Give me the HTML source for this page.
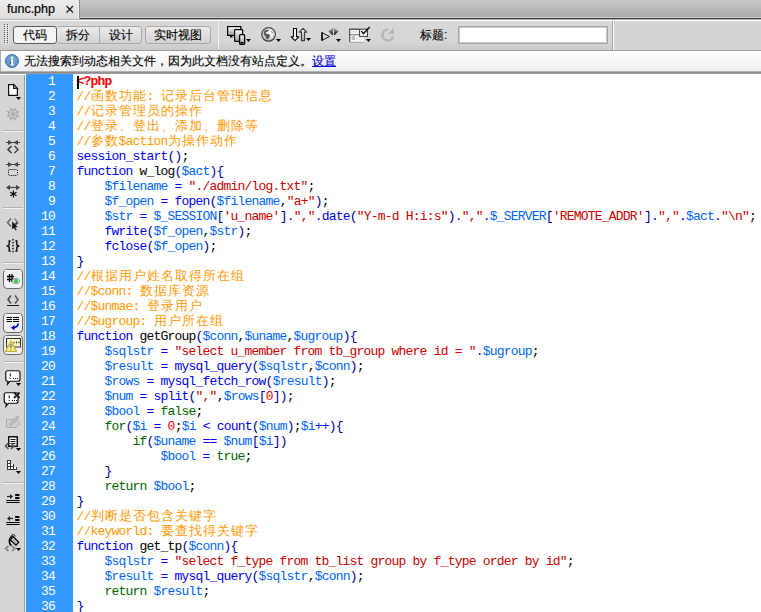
<!DOCTYPE html>
<html><head><meta charset="utf-8">
<style>
*{margin:0;padding:0;box-sizing:border-box}
html,body{width:761px;height:612px;overflow:hidden;background:#fff;font-family:"Liberation Sans",sans-serif}
.a{position:absolute}
#tabbar{left:0;top:0;width:761px;height:19px;background:linear-gradient(#c8c8c8,#aaaaaa);border-bottom:1px solid #3a3a3a}
#tabbar:after{content:"";position:absolute;left:0;right:0;bottom:0;height:1px;background:#cfcfcf}
#tab{left:0;top:0;width:80px;height:19px;background:linear-gradient(#ececec,#dcdcdc);border-right:1px solid #888;box-shadow:inset -1px 0 0 #f4f4f4;z-index:2}
#tab span{position:absolute;left:7px;top:2px;font-size:12.5px;color:#000;-webkit-text-stroke:0.2px #000}
#line19{left:0;top:19px;width:761px;height:1px;background:#b0b0b0}
#line20{left:0;top:20px;width:761px;height:1px;background:#fff}
#toolbar{left:0;top:21px;width:761px;height:29px;background:linear-gradient(#d8d8d8 0%,#d6d6d6 70%,#c9c9c9 100%)}
#toolbar2{left:614px;top:21px;width:147px;height:29px;background:#d4d4d4}
#line50{left:0;top:50px;width:761px;height:1px;background:#9a9a9a}
.btn{-webkit-text-stroke:0.12px #000;position:absolute;top:26px;height:18px;font-size:12px;color:#000;text-align:center;line-height:17px;border:1px solid #a8a8a8;background:linear-gradient(#ececec,#d2d2d2);}
#b1{left:13px;width:44px;background:#f4f4f4;border-color:#5a5a5a;border-radius:3px}
#b2{left:57px;width:43px;border-radius:3px 0 0 3px;border-left:none}
#b3{left:99px;width:43px;border-radius:0 3px 3px 0}
#b4{left:145px;width:66px;border-radius:3px}
.sep{position:absolute;top:22px;width:1px;height:27px}
#grip{left:4px;top:24px;width:4px;height:20px;background-image:radial-gradient(circle,#777 0.8px,transparent 1px);background-size:3px 2.5px}
#title{left:420px;top:27px;font-size:12px;color:#000;-webkit-text-stroke:0.12px #000}
#tinput{left:458px;top:26px;width:150px;height:18px;background:#fff;border:1px solid #a4a4ac;box-shadow:inset 0 0 0 1px #c8c8cc}
#info{left:0;top:51px;width:761px;height:20px;background:linear-gradient(#fdfdfd,#efefef);border-left:1px solid #a8a8a8}
#infotxt{left:24px;top:53px;font-size:12px;color:#000;white-space:pre;-webkit-text-stroke:0.12px #000}
#infotxt u{color:#0000e0;-webkit-text-stroke:0.12px #0000e0}
#icon-i{left:5px;top:54px;width:14px;height:14px;border-radius:50%;background:radial-gradient(circle at 50% 40%,#7eb0dc,#4d86bd);border:1px solid #3a6c9e;color:#fff;font-family:"Liberation Serif",serif;font-weight:bold;font-size:11px;text-align:center;line-height:12px}
#line71{left:0;top:71px;width:761px;height:1px;background:#b0b0b0}
#line72{left:0;top:72px;width:761px;height:2px;background:linear-gradient(#8a8a8a,#a0a0a0)}
#side{left:0;top:74px;width:26px;height:538px;background:#d6d6d6;border-top:1px solid #fff}
#sideb{left:24px;top:75px;width:1px;height:537px;background:#999}
#sidew{left:25px;top:75px;width:1px;height:537px;background:#f4f4f4}
#gutter{left:26px;top:74px;width:47px;height:538px;background:#3399ff}
#nums{left:26px;top:74px;width:29px;color:#fff;text-align:right;font-family:"Liberation Mono",monospace;font-size:13px;letter-spacing:-0.8px;line-height:15px}
#nums div{height:15px}
#code{left:76.5px;top:74px;width:700px;font-family:"Liberation Mono",monospace;font-size:13px;letter-spacing:-0.8px;line-height:15px;color:#000;white-space:pre}
.ln{height:15px;white-space:pre}
i{font-style:normal}
b.w{font-weight:normal;display:inline-block;width:14px;font-size:13px;letter-spacing:0;text-align:center}
.k{color:#0000ff}.v{color:#0066ff}.p{color:#000099}.s{color:#cc0000}.n{color:#ff0000}.g{color:#006600}.c{color:#ff9900}.t{color:#ff0000;font-weight:bold}
#cursor{left:77px;top:76px;width:2px;height:13px;background:#000}
.sb{position:absolute;left:3px;width:20px;height:20px;border:1px solid #8a8a8a;border-radius:4px;background:#f0f0f0}
.ssep{position:absolute;left:3px;width:20px;height:1px;background:#b8b8b8;box-shadow:0 1px 0 #f2f2f2}
</style></head><body>
<div id="tabbar" class="a"></div>
<div id="tab" class="a"><span>func.php</span>
<svg class="a" style="left:65px;top:5px" width="9" height="9" viewBox="0 0 9 9"><path d="M1.5 1L8 7.5M8 1L1.5 7.5" stroke="#111" stroke-width="1.1"/></svg></div>
<div id="line19" class="a"></div>
<div id="line20" class="a"></div>
<div id="toolbar" class="a"></div>
<div id="toolbar2" class="a"></div>
<div id="b1" class="btn">代码</div>
<div id="b2" class="btn">拆分</div>
<div id="b3" class="btn">设计</div>
<div id="b4" class="btn">实时视图</div>
<div class="sep" style="left:218px;background:#f4f4f4"></div>
<div class="sep" style="left:612px;top:21px;height:29px;background:#a4a4a4"></div>
<div class="sep" style="left:613px;top:21px;height:29px;background:#fff"></div>
<div id="title" class="a">标题:</div>
<div id="tinput" class="a"></div>
<div id="line50" class="a"></div>
<div id="info" class="a"></div>
<div id="icon-i" class="a"></div>
<div id="infotxt" class="a">无法搜索到动态相关文件，因为此文档没有站点定义。<u>设置</u></div>
<div id="line71" class="a"></div>
<div id="line72" class="a"></div>
<div id="side" class="a"></div>
<div id="sideb" class="a"></div>
<div id="sidew" class="a"></div>
<div id="gutter" class="a"></div>
<div id="nums" class="a"><div>1</div><div>2</div><div>3</div><div>4</div><div>5</div><div>6</div><div>7</div><div>8</div><div>9</div><div>10</div><div>11</div><div>12</div><div>13</div><div>14</div><div>15</div><div>16</div><div>17</div><div>18</div><div>19</div><div>20</div><div>21</div><div>22</div><div>23</div><div>24</div><div>25</div><div>26</div><div>27</div><div>28</div><div>29</div><div>30</div><div>31</div><div>32</div><div>33</div><div>34</div><div>35</div><div>36</div></div>
<div id="code" class="a"><div class="ln"><i class="t">&lt;?php</i></div><div class="ln"><i class="c">//<b class="w">函</b><b class="w">数</b><b class="w">功</b><b class="w">能</b>: <b class="w">记</b><b class="w">录</b><b class="w">后</b><b class="w">台</b><b class="w">管</b><b class="w">理</b><b class="w">信</b><b class="w">息</b></i></div><div class="ln"><i class="c">//<b class="w">记</b><b class="w">录</b><b class="w">管</b><b class="w">理</b><b class="w">员</b><b class="w">的</b><b class="w">操</b><b class="w">作</b></i></div><div class="ln"><i class="c">//<b class="w">登</b><b class="w">录</b><b class="w">、</b><b class="w">登</b><b class="w">出</b><b class="w">、</b><b class="w">添</b><b class="w">加</b><b class="w">、</b><b class="w">删</b><b class="w">除</b><b class="w">等</b></i></div><div class="ln"><i class="c">//<b class="w">参</b><b class="w">数</b>$action<b class="w">为</b><b class="w">操</b><b class="w">作</b><b class="w">动</b><b class="w">作</b></i></div><div class="ln"><i class="k">session_start</i><i class="p">()</i>;</div><div class="ln"><i class="k">function</i> w_log<i class="p">(</i><i class="v">$act</i><i class="p">){</i></div><div class="ln">    <i class="v">$filename</i> <i class="k">=</i> <i class="s">&quot;./admin/log.txt&quot;</i>;</div><div class="ln">    <i class="v">$f_open</i> <i class="k">=</i> <i class="k">fopen</i><i class="p">(</i><i class="v">$filename</i>,<i class="s">&quot;a+&quot;</i><i class="p">)</i>;</div><div class="ln">    <i class="v">$str</i> <i class="k">=</i> <i class="v">$_SESSION</i><i class="p">[</i><i class="s">&#x27;u_name&#x27;</i><i class="p">]</i><i class="k">.</i><i class="s">&quot;,&quot;</i><i class="k">.</i><i class="k">date</i><i class="p">(</i><i class="s">&quot;Y-m-d H:i:s&quot;</i><i class="p">)</i><i class="k">.</i><i class="s">&quot;,&quot;</i><i class="k">.</i><i class="v">$_SERVER</i><i class="p">[</i><i class="s">&#x27;REMOTE_ADDR&#x27;</i><i class="p">]</i><i class="k">.</i><i class="s">&quot;,&quot;</i><i class="k">.</i><i class="v">$act</i><i class="k">.</i><i class="s">&quot;\n&quot;</i>;</div><div class="ln">    <i class="k">fwrite</i><i class="p">(</i><i class="v">$f_open</i>,<i class="v">$str</i><i class="p">)</i>;</div><div class="ln">    <i class="k">fclose</i><i class="p">(</i><i class="v">$f_open</i><i class="p">)</i>;</div><div class="ln"><i class="p">}</i></div><div class="ln"><i class="c">//<b class="w">根</b><b class="w">据</b><b class="w">用</b><b class="w">户</b><b class="w">姓</b><b class="w">名</b><b class="w">取</b><b class="w">得</b><b class="w">所</b><b class="w">在</b><b class="w">组</b></i></div><div class="ln"><i class="c">//$conn: <b class="w">数</b><b class="w">据</b><b class="w">库</b><b class="w">资</b><b class="w">源</b></i></div><div class="ln"><i class="c">//$unmae: <b class="w">登</b><b class="w">录</b><b class="w">用</b><b class="w">户</b></i></div><div class="ln"><i class="c">//$ugroup: <b class="w">用</b><b class="w">户</b><b class="w">所</b><b class="w">在</b><b class="w">组</b></i></div><div class="ln"><i class="k">function</i> getGroup<i class="p">(</i><i class="v">$conn</i>,<i class="v">$uname</i>,<i class="v">$ugroup</i><i class="p">)</i><i class="p">{</i></div><div class="ln">    <i class="v">$sqlstr</i> <i class="k">=</i> <i class="s">&quot;select u_member from tb_group where id = &quot;</i><i class="k">.</i><i class="v">$ugroup</i>;</div><div class="ln">    <i class="v">$result</i> <i class="k">=</i> <i class="k">mysql_query</i><i class="p">(</i><i class="v">$sqlstr</i>,<i class="v">$conn</i><i class="p">)</i>;</div><div class="ln">    <i class="v">$rows</i> <i class="k">=</i> <i class="k">mysql_fetch_row</i><i class="p">(</i><i class="v">$result</i><i class="p">)</i>;</div><div class="ln">    <i class="v">$num</i> <i class="k">=</i> <i class="k">split</i><i class="p">(</i><i class="s">&quot;,&quot;</i>,<i class="v">$rows</i><i class="p">[</i><i class="n">0</i><i class="p">])</i>;</div><div class="ln">    <i class="v">$bool</i> <i class="k">=</i> <i class="g">false</i>;</div><div class="ln">    <i class="g">for</i><i class="p">(</i><i class="v">$i</i> <i class="k">=</i> <i class="n">0</i>;<i class="v">$i</i> <i class="k">&lt;</i> <i class="k">count</i><i class="p">(</i><i class="v">$num</i><i class="p">)</i>;<i class="v">$i</i><i class="k">++</i><i class="p">)</i><i class="p">{</i></div><div class="ln">        <i class="g">if</i><i class="p">(</i><i class="v">$uname</i> <i class="k">==</i> <i class="v">$num</i><i class="p">[</i><i class="v">$i</i><i class="p">])</i></div><div class="ln">            <i class="v">$bool</i> <i class="k">=</i> <i class="g">true</i>;</div><div class="ln">    <i class="p">}</i></div><div class="ln">    <i class="g">return</i> <i class="v">$bool</i>;</div><div class="ln"><i class="p">}</i></div><div class="ln"><i class="c">//<b class="w">判</b><b class="w">断</b><b class="w">是</b><b class="w">否</b><b class="w">包</b><b class="w">含</b><b class="w">关</b><b class="w">键</b><b class="w">字</b></i></div><div class="ln"><i class="c">//keyworld: <b class="w">要</b><b class="w">查</b><b class="w">找</b><b class="w">得</b><b class="w">关</b><b class="w">键</b><b class="w">字</b></i></div><div class="ln"><i class="k">function</i> get_tp<i class="p">(</i><i class="v">$conn</i><i class="p">)</i><i class="p">{</i></div><div class="ln">    <i class="v">$sqlstr</i> <i class="k">=</i> <i class="s">&quot;select f_type from tb_list group by f_type order by id&quot;</i>;</div><div class="ln">    <i class="v">$result</i> <i class="k">=</i> <i class="k">mysql_query</i><i class="p">(</i><i class="v">$sqlstr</i>,<i class="v">$conn</i><i class="p">)</i>;</div><div class="ln">    <i class="g">return</i> <i class="v">$result</i>;</div><div class="ln"><i class="p">}</i></div></div>
<div id="cursor" class="a"></div>
<svg class="a" style="left:0;top:0" width="761" height="612" viewBox="0 0 761 612">
<defs>
<linearGradient id="gw" x1="0" y1="0" x2="0" y2="1"><stop offset="0" stop-color="#fff"/><stop offset="1" stop-color="#9a9a9a"/></linearGradient>
<linearGradient id="gw2" x1="0" y1="0" x2="0" y2="1"><stop offset="0" stop-color="#f4f4f4"/><stop offset="1" stop-color="#a8a8a8"/></linearGradient>
<radialGradient id="globe" cx="0.55" cy="0.35" r="0.7"><stop offset="0" stop-color="#fff"/><stop offset="0.6" stop-color="#e0e0e0"/><stop offset="1" stop-color="#9a9a9a"/></radialGradient>
<linearGradient id="dia" x1="0" y1="0" x2="0" y2="1"><stop offset="0" stop-color="#bdbdbd"/><stop offset="1" stop-color="#111"/></linearGradient>
</defs>
<!-- grip -->
<g fill="#fff"><rect x="5" y="25" width="1" height="1"/><rect x="8" y="25" width="1" height="1"/><rect x="5" y="27" width="1" height="1"/><rect x="8" y="27" width="1" height="1"/><rect x="5" y="29" width="1" height="1"/><rect x="8" y="29" width="1" height="1"/><rect x="5" y="31" width="1" height="1"/><rect x="8" y="31" width="1" height="1"/><rect x="5" y="33" width="1" height="1"/><rect x="8" y="33" width="1" height="1"/><rect x="5" y="35" width="1" height="1"/><rect x="8" y="35" width="1" height="1"/><rect x="5" y="37" width="1" height="1"/><rect x="8" y="37" width="1" height="1"/><rect x="5" y="39" width="1" height="1"/><rect x="8" y="39" width="1" height="1"/><rect x="5" y="41" width="1" height="1"/><rect x="8" y="41" width="1" height="1"/><rect x="5" y="43" width="1" height="1"/><rect x="8" y="43" width="1" height="1"/></g>
<g fill="#555"><rect x="4" y="24" width="1" height="1"/><rect x="7" y="24" width="1" height="1"/><rect x="4" y="26" width="1" height="1"/><rect x="7" y="26" width="1" height="1"/><rect x="4" y="28" width="1" height="1"/><rect x="7" y="28" width="1" height="1"/><rect x="4" y="30" width="1" height="1"/><rect x="7" y="30" width="1" height="1"/><rect x="4" y="32" width="1" height="1"/><rect x="7" y="32" width="1" height="1"/><rect x="4" y="34" width="1" height="1"/><rect x="7" y="34" width="1" height="1"/><rect x="4" y="36" width="1" height="1"/><rect x="7" y="36" width="1" height="1"/><rect x="4" y="38" width="1" height="1"/><rect x="7" y="38" width="1" height="1"/><rect x="4" y="40" width="1" height="1"/><rect x="7" y="40" width="1" height="1"/><rect x="4" y="42" width="1" height="1"/><rect x="7" y="42" width="1" height="1"/></g>
<!-- info i --><g transform="translate(1.2,0)">
<path d="M9.2 59.6h2.7v4.8h1v1.2h-4.2v-1.2h0.9v-3.6h-0.9z" fill="#fff"/>
<path d="M9 59.8v1M8.6 64.5v1.2M9.4 61v3.2" stroke="#1e3e5e" stroke-width="0.8"/>
<rect x="9.9" y="56.6" width="2.1" height="2.1" fill="#fff"/>
</g>
<!-- devices -->
<rect x="227.6" y="26.6" width="13.2" height="8.8" fill="url(#gw)" stroke="#000" stroke-width="1.2"/>
<path d="M230 36h2.5v1.5h-2.5z" fill="#000"/>
<rect x="234.6" y="29.6" width="8" height="11.8" rx="0.5" fill="url(#gw)" stroke="#000" stroke-width="1.2"/>
<rect x="239.6" y="34.6" width="5" height="9.8" rx="1" fill="url(#gw2)" stroke="#000" stroke-width="1.3"/>
<rect x="240.5" y="42" width="3" height="1.5" fill="#000"/>
<path d="M246 39h5l-2.5 3z" fill="#000"/>
<!-- globe -->
<circle cx="268.6" cy="34.4" r="6.8" fill="url(#globe)" stroke="#444" stroke-width="1.2"/>
<path d="M264.5 30.5c1.5-0.8 3.5-0.8 4.5-0.5l-1 1.5c-1 0-2 0.5-2.5 1.5l1.5 1c1.2-0.3 2.5 0.2 3 1.2l-0.5 2.3-1.5 1.5h-1.5l-0.5-2-1.5-1.5-1-2z" fill="#555"/>
<path d="M271 31l1.5 0.5 0.5 1.5-1 0z M273.5 35l0.8 1.5-0.6 1.2z" fill="#777"/>
<path d="M276 39h5l-2.5 3z" fill="#000"/>
<!-- arrows down/up -->
<path d="M293.5 28.5h3v8.3h2.3l-3.8 3.8-3.8-3.8h2.3z" fill="#fff" stroke="#000" stroke-width="1.1" stroke-linejoin="round"/>
<path d="M303 28.4l3.7 3.7h-2.2v8.5h-3v-8.5h-2.2z" fill="url(#gw2)" stroke="#3a3a3a" stroke-width="1.1" stroke-linejoin="round"/>
<path d="M306 38h5l-2.5 3z" fill="#000"/>
<!-- play + diamond -->
<path d="M322 32.6v7.8l7.4-3.9z" fill="#d8d8d8" stroke="#111" stroke-width="1" stroke-linejoin="miter"/>
<path d="M322 32.3v8.4" stroke="#000" stroke-width="1.5"/>
<path d="M333.5 27.6l5.2 3.6-3.8 3.8h-2.8l-3.8-3.8z" fill="url(#dia)"/>
<path d="M333.5 29.5v5.6" stroke="#d8d8d8" stroke-width="1"/>
<path d="M336 39h5l-2.5 3z" fill="#000"/>
<!-- form check -->
<path d="M349.75 42V29.25H359" fill="none" stroke="#555" stroke-width="1.4"/>
<rect x="350.5" y="30" width="9" height="4" fill="#fff"/>
<path d="M350 34.8h10" stroke="#666" stroke-width="1"/><path d="M351.5 32h7" stroke="#c8c8c8" stroke-width="1"/>
<rect x="350.5" y="35.5" width="13.5" height="6.3" fill="#fff"/>
<rect x="351.5" y="36" width="3.5" height="4" fill="#bbb"/>
<rect x="356.5" y="37" width="5.5" height="3" fill="#eee" stroke="#ddd" stroke-width="0.6"/>
<path d="M350 42.3h14" stroke="#999" stroke-width="0.8"/>
<rect x="359.6" y="29.2" width="7.8" height="7.2" fill="#fff" stroke="#333" stroke-width="1"/>
<path d="M361.3 31l2.2 2.6 6.2-6.6" fill="none" stroke="#111" stroke-width="1.4"/>
<path d="M366 39h5l-2.5 3z" fill="#000"/>
<!-- sidebar icons -->
<path d="M8.6 84.6h5l3.8 3.8v7h-8.8z" fill="#fff" stroke="#111" stroke-width="1.2" stroke-linejoin="miter"/>
<path d="M13.6 84.6v3.8h3.8z" fill="#e4e4e4" stroke="#111" stroke-width="1.1"/>
<path d="M16 97h5l-2.5 3z" fill="#000"/>
<g stroke="#a6a6a6" fill="none"><circle cx="13" cy="114" r="4.6" stroke-width="1.2"/><path d="M13.46 112.89L15.68 107.53M14.11 113.54L19.47 111.32M14.11 114.46L19.47 116.68M13.46 115.11L15.68 120.47M12.54 115.11L10.32 120.47M11.89 114.46L6.53 116.68M11.89 113.54L6.53 111.32M12.54 112.89L10.32 107.53" stroke-width="1"/></g>
<circle cx="13" cy="114" r="1.2" fill="#aaa"/>
<g stroke="#b2b2b2" stroke-width="1"><path d="M3 130.5h20M3 207.5h20M3 262.5h20M3 361.5h20M3 482.5h20"/></g>
<g stroke="#f4f4f4" stroke-width="1"><path d="M3 131.5h20M3 208.5h20M3 263.5h20M3 362.5h20M3 483.5h20"/></g>
<!-- collapse full tag -->
<path d="M6 142.5h14" stroke="#444" stroke-width="1"/>
<path d="M8 140l4.5 2.5-4.5 2.5z M18 140l-4.5 2.5 4.5 2.5z" fill="#444"/>
<path d="M11.5 146l-3.5 3.5 3.5 3.5" fill="none" stroke="#333" stroke-width="1.5"/>
<path d="M14.5 146l3.5 3.5-3.5 3.5" fill="none" stroke="#444" stroke-width="1.5"/>
<!-- collapse selection -->
<path d="M6 164.5h14" stroke="#444" stroke-width="1"/>
<path d="M8 162l4.5 2.5-4.5 2.5z M18 162l-4.5 2.5 4.5 2.5z" fill="#444"/>
<rect x="8.5" y="169.5" width="9" height="6" rx="1" fill="none" stroke="#000" stroke-width="1" stroke-dasharray="1 1"/>
<!-- expand all -->
<path d="M7 187.5h12" stroke="#444" stroke-width="1.2"/>
<path d="M6 187.5l4-2.8v5.6z M20 187.5l-4-2.8v5.6z" fill="#444"/>
<g stroke="#000" stroke-width="1.1"><path d="M13.4 190.5v7M10.3 192.2l6.2 3.5M16.5 192.2l-6.2 3.5"/></g>
<!-- select parent tag -->
<path d="M11 218.5l-3.5 4 3.5 4" fill="none" stroke="#666" stroke-width="1.6"/>
<path d="M14.5 218.5l3.5 4-3.5 4" fill="none" stroke="#888" stroke-width="1.6"/>
<path d="M17 222.5l-1.5 1.7" stroke="#222" stroke-width="1.5"/>
<path d="M12.2 221.2v8.3l1.9-1.8 1.5 2.8 1.1-0.6-1.5-2.7h2.5z" fill="#111"/>
<!-- balance braces -->
<path d="M10.6 241h-1.4v3.9l-1.9 1.1 1.9 1.1v3.9h1.4M15.4 241h1.4v3.9l1.9 1.1-1.9 1.1v3.9h-1.4" fill="none" stroke="#000" stroke-width="1.3"/>
<path d="M12.3 240.3l1.4-1.4M12.3 243.3l1.4-1.4M12.3 246.3l1.4-1.4M12.3 249.3l1.4-1.4M12.3 252.3l1.4-1.4" stroke="#333" stroke-width="1.4"/>
<!-- buttons -->
<rect x="3.5" y="269.5" width="19" height="19" rx="3.5" fill="#f1f1f1" stroke="#6a6a6a" stroke-width="1"/>
<rect x="3.5" y="313.5" width="19" height="19" rx="3.5" fill="#f1f1f1" stroke="#6a6a6a" stroke-width="1"/>
<rect x="3.5" y="335.5" width="19" height="19" rx="3.5" fill="#f1f1f1" stroke="#6a6a6a" stroke-width="1"/>
<path d="M5 270.5h16M5 314.5h16M5 336.5h16" stroke="#fff" stroke-width="1"/>
<!-- # eye -->
<path d="M9.5 274v8M12 274v8M7 276.5h7M7 279.5h7" stroke="#000" stroke-width="1.3"/>
<ellipse cx="16" cy="281" rx="3.7" ry="2.6" fill="#dfe8f0" stroke="#8a95a8" stroke-width="0.9"/>
<circle cx="16" cy="281" r="1.9" fill="#22cc22"/>
<!-- syntax error -->
<path d="M11 295.5l-3 4 3 4" fill="none" stroke="#444" stroke-width="1.5"/>
<path d="M15 295.5l3 4-3 4" fill="none" stroke="#555" stroke-width="1.5"/>
<path d="M7 305l1 1 1-1 1 1 1-1 1 1 1-1 1 1 1-1 1 1 1-1 1 1 1-1" fill="none" stroke="#000" stroke-width="0.9"/>
<!-- wrap -->
<path d="M6.5 317.5h5.5M13 317.5h6M6.5 319.5h5.5M13 319.5h6M6.5 321.5h5.5M13 321.5h6" stroke="#000" stroke-width="1.1"/>
<path d="M18 323.5c0.8 1.8-1.5 4-4.5 4.2" fill="none" stroke="#0000cc" stroke-width="1.6"/>
<path d="M11 327.8l3.5-2.8v5.4z" fill="#0000cc"/>
<!-- warning -->
<rect x="6.5" y="338.5" width="14" height="8.5" fill="#fdf8c8" stroke="#333" stroke-width="1"/>
<path d="M13.5 342.5h1M16 342.5h1M18.5 342.5h1" stroke="#222" stroke-width="1.4"/>
<path d="M11 341l-5.5 10.5h11z" fill="#f4eda0" stroke="#c0b030" stroke-width="1.2" stroke-linejoin="round"/>
<path d="M11 344v4M11 349.2v1" stroke="#8a6a40" stroke-width="1.3"/>
<!-- comment bubble -->
<path d="M8.5 370.75h9.5a2 2 0 0 1 2 2v6.5a2 2 0 0 1-2 2h-8l-2.5 3 0.5-3h-0.5a1.75 1.75 0 0 1-1.75-1.75v-6.75a2 2 0 0 1 2-2z" fill="#fff" stroke="#111" stroke-width="1.2"/>
<path d="M10.2 373.5v3" stroke="#000" stroke-width="1"/>
<path d="M9.7 378.5h1M13 378.5h1M15 378.5h1M17 378.5h1" stroke="#000" stroke-width="1"/>
<path d="M16 383h5l-2.5 3z" fill="#000"/>
<!-- remove comment -->
<path d="M7.5 392.75h8.5a2 2 0 0 1 2 2v6.5a2 2 0 0 1-2 2h-7.5l-2.5 3 0.5-3h-0.5a1.75 1.75 0 0 1-1.75-1.75v-6.75a2 2 0 0 1 2-2z" fill="#fff" stroke="#111" stroke-width="1.2"/>
<path d="M9.2 395.5v3" stroke="#000" stroke-width="1"/>
<path d="M8.7 400.5h1M12 400.5h1M14 400.5h1M16 400.5h1" stroke="#000" stroke-width="1"/>
<path d="M14 392.5l5.5 5.5M19.5 392.5l-5.5 5.5" stroke="#222" stroke-width="1.8"/>
<!-- pencil disabled -->
<path d="M6.5 419.5h9.5l4 4-4 4h-9.5z" fill="#d0d0d0" stroke="#ababab" stroke-width="1"/>
<path d="M9.5 425.5l9-9" stroke="#ababab" stroke-width="3"/>
<path d="M10 425l8-8" stroke="#cfcfcf" stroke-width="1"/>
<!-- doc snippet -->
<rect x="8.75" y="436.75" width="8.5" height="9.5" fill="#fff" stroke="#111" stroke-width="1.5"/>
<path d="M10.5 439.5h5M10.5 441.5h5M10.5 443.5h5" stroke="#222" stroke-width="1"/>
<path d="M8.5 443l-3 3 3 3M11 443l3 3-3 3" fill="none" stroke="#555" stroke-width="1.6"/>
<path d="M16 448h5l-2.5 3z" fill="#000"/>
<!-- stair -->
<path d="M7 460h4v4h3v3h3v3h-10z" fill="#333"/>
<path d="M8 461h2v2h-2zM8 464h2v2h-2zM11 464h2v2h-2zM8 467h2v2h-2zM11 467h2v2h-2zM14 467h2v2h-2z" fill="#fff"/>
<path d="M16 471h5l-2.5 3z" fill="#000"/>
<!-- indent -->
<path d="M7 496.5h4" stroke="#222" stroke-width="1.2"/><path d="M13 496.5l-3-2.5v5z" fill="#222"/>
<rect x="15" y="494" width="4.6" height="2" rx="0.8" fill="#000"/><rect x="15" y="497" width="4.6" height="2" rx="0.8" fill="#000"/>
<path d="M6.3 500.5h13.3M6.3 502.5h13.3" stroke="#000" stroke-width="1"/>
<!-- outdent -->
<path d="M9 518.5h4" stroke="#222" stroke-width="1.2"/><path d="M7 518.5l3-2.5v5z" fill="#222"/>
<rect x="15" y="516" width="4.6" height="2" rx="0.8" fill="#000"/><rect x="15" y="519" width="4.6" height="2" rx="0.8" fill="#000"/>
<path d="M6.3 522.5h13.3M6.3 524.5h13.3" stroke="#000" stroke-width="1"/>
<!-- format -->
<path d="M12.5 536c-2.5 1-3.5 4-3 6.5 0.3 1.5 1.2 2.5 2 3" fill="none" stroke="#000" stroke-width="1.6"/>
<path d="M13 536.5l5.8 5.8-2.8 2.8-5.5-5z" fill="#bbb" stroke="#000" stroke-width="1.2"/>
<path d="M12.5 538a1.8 1.8 0 1 1 2.5-1.5" fill="none" stroke="#111" stroke-width="1"/>
<path d="M8.5 546l-3 2.5 3 2.5M12 546l3 2.5-3 2.5" fill="none" stroke="#888" stroke-width="1.7"/>
<path d="M16 548h5l-2.5 3z" fill="#000"/>
<!-- refresh disabled -->
<path d="M393.1 36.2A5.4 5.4 0 1 1 388.2 29.6" fill="none" stroke="#b5b5b5" stroke-width="2.5"/>
<path d="M387.6 34l6.3 0v-6.3z" fill="#b5b5b5"/>
</svg>
</body></html>
